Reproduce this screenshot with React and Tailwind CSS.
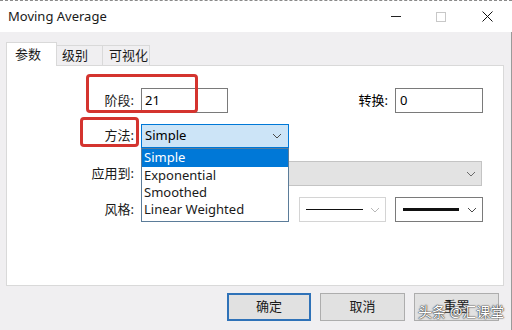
import React from "react";

const cn = "font-['Segoe_UI','Noto_Sans','Noto_Sans_CJK_SC',sans-serif]";

const Chevron = ({ color = "#606060" }) => (
    <svg width="10" height="6" viewBox="0 0 10 6" className="shrink-0">
        <path d="M1 1 L5 5 L9 1" fill="none" stroke={color} strokeWidth="1" />
    </svg>
);

const Label = ({ children }) => (
    <div className="w-[128px] shrink-0 pr-[1px] text-right text-[13px] text-[#1a1a1a]">{children}</div>
);

const App = () => {
    return (
        <div className={`relative h-[330px] w-[512px] overflow-hidden bg-[#f0eff1] ${cn}`}>
            {/* title bar */}
            <div className="flex h-[32px] items-center border-t border-dashed border-[#8a8a8a] bg-white pl-[8px]">
                <span className="text-[13px] text-[#1a1a1a]">Moving Average</span>
                <div className="ml-auto flex items-center">
                    <div className="h-[1px] w-[10px] bg-[#222]" />
                    <div className="ml-[35px] h-[10px] w-[10px] border border-[#c8c8c8]" />
                    <svg width="11" height="11" viewBox="0 0 11 11" className="ml-[36px] mr-[19px]">
                        <path d="M0.5 0.5 L10.5 10.5 M10.5 0.5 L0.5 10.5" stroke="#111" strokeWidth="1" />
                    </svg>
                </div>
            </div>

            {/* body */}
            <div className="flex h-[298px] border-r border-[#9a9a9a] pl-[6px] pr-[7px]">
                <div className="flex flex-1 flex-col pt-[10px]">
                    {/* tabs */}
                    <div className="flex h-[23px] items-end text-[13px] text-[#1a1a1a]">
                        <div className="relative z-10 -mb-[1px] flex h-[24px] w-[51px] items-center border border-b-0 border-[#d9d9d9] bg-white pl-[8px]">
                            参数
                        </div>
                        <div className="flex h-[20px] w-[46px] items-center border-t border-r border-[#d9d9d9] bg-[#f0eff1] pl-[5px]">
                            级别
                        </div>
                        <div className="flex h-[20px] w-[47px] items-center border-t border-r border-[#d9d9d9] bg-[#f0eff1] pl-[6px]">
                            可视化
                        </div>
                    </div>

                    {/* panel */}
                    <div className="h-[221px] border border-[#d9d9d9] bg-white pt-[22px]">
                        <div className="flex h-[25px] items-center">
                            <Label>阶段:</Label>
                            <div className="ml-[6px] flex h-[25px] w-[87px] items-center border border-[#7a7a7a] pl-[3px] text-[13px]">21</div>
                            <div className="ml-[128px] w-[32px] text-right text-[13px]">转换:</div>
                            <div className="ml-[7px] flex h-[25px] w-[88px] items-center border border-[#7a7a7a] pl-[4px] text-[13px]">0</div>
                        </div>

                        <div className="mt-[11px] flex h-[24px] items-center">
                            <Label>方法:</Label>
                            <div className="ml-[6px] flex h-[24px] w-[148px] items-center justify-between border border-[#0078d7] bg-[#cce4f7] pl-[3px] pr-[6px] text-[13px]">
                                <span>Simple</span>
                                <Chevron color="#4a4a4a" />
                            </div>
                        </div>

                        <div className="mt-[13px] flex h-[25px] items-center">
                            <Label>应用到:</Label>
                            <div className="ml-[6px] flex h-[25px] w-[341px] items-center justify-end border border-[#c4c4c4] bg-[#e3e3e3] pr-[5px]">
                                <Chevron color="#6a6a6a" />
                            </div>
                        </div>

                        <div className="mt-[11px] flex h-[25px] items-center">
                            <Label>风格:</Label>
                            <div className="ml-[6px] h-[25px] w-[148px] border border-[#7a7a7a]" />
                            <div className="ml-[10px] flex h-[25px] w-[87px] items-center border border-[#d4d4d4] pl-[6px] pr-[5px]">
                                <div className="h-[1px] w-[57px] bg-[#111]" />
                                <div className="ml-auto"><Chevron color="#b8b8b8" /></div>
                            </div>
                            <div className="ml-[9px] flex h-[25px] w-[88px] items-center border border-[#7a7a7a] pl-[7px] pr-[5px]">
                                <div className="h-[3px] w-[56px] bg-[#111]" />
                                <div className="ml-auto"><Chevron color="#4a4a4a" /></div>
                            </div>
                        </div>
                    </div>

                    {/* buttons */}
                    <div className="mt-[7px] flex gap-[9px] pl-[221px] text-[13px] text-[#1a1a1a]">
                        <div className="flex h-[28px] w-[84px] items-center justify-center border-2 border-[#2f72b8] bg-[#e1e1e1]">确定</div>
                        <div className="flex h-[28px] w-[85px] items-center justify-center border border-[#adadad] bg-[#e1e1e1]">取消</div>
                        <div className="flex h-[28px] w-[85px] items-center justify-center border border-[#adadad] bg-[#e1e1e1]">重置</div>
                    </div>
                </div>
            </div>

            {/* open dropdown list */}
            <div className="absolute left-[141px] top-[148px] w-[148px] border border-[#5b7c99] bg-white pb-[3px] text-[13px] leading-[17px] text-[#1a1a1a]">
                <div className="h-[18px] bg-[#0078d7] pl-[2px] text-white">Simple</div>
                <div className="h-[17px] pl-[2px]">Exponential</div>
                <div className="h-[17px] pl-[2px]">Smoothed</div>
                <div className="h-[17px] pl-[2px]">Linear Weighted</div>
            </div>

            {/* red markers */}
            <div className="absolute left-[86px] top-[74px] h-[39px] w-[112px] rounded-[4px] border-[3px] border-[#d4342f]" />
            <div className="absolute left-[80px] top-[117px] h-[30px] w-[59px] rounded-[4px] border-[3px] border-[#d4342f]" />

            {/* watermark */}
            <div className="absolute left-[418px] top-[303px] whitespace-nowrap text-[14px] leading-[18px] text-white [text-shadow:0_0_1px_#333,0_0_1px_#333,0_0_2px_#555]">
                头条 @汇课堂
            </div>
        </div>
    );
};

export default App;
